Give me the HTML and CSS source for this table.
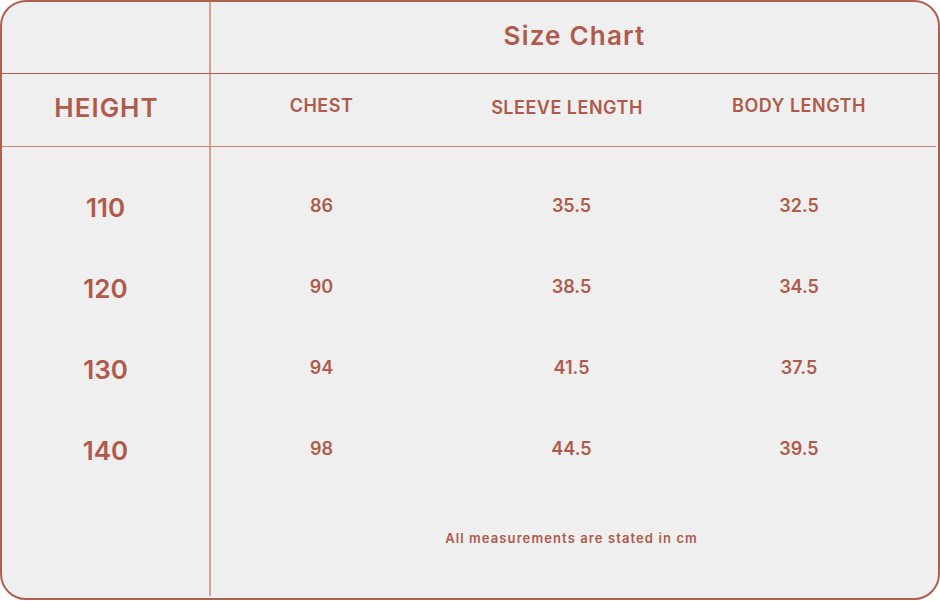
FILE: index.html
```html
<!DOCTYPE html>
<html>
<head>
<meta charset="utf-8">
<link rel="stylesheet" href="styles.css">
</head>
<body>
<div class="chart">
  <div class="row top">
    <div class="side"></div>
    <div class="main title">Size Chart</div>
  </div>
  <div class="row head">
    <div class="side label-big">HEIGHT</div>
    <div class="main cols">
      <div class="c1 label">CHEST</div>
      <div class="c2 label sleeve">SLEEVE LENGTH</div>
      <div class="c3 label">BODY LENGTH</div>
    </div>
  </div>
  <div class="row bodyrow">
    <div class="side list">
      <div class="h">110</div>
      <div class="h">120</div>
      <div class="h">130</div>
      <div class="h">140</div>
    </div>
    <div class="main data">
      <div class="drow"><div class="c1">86</div><div class="c2">35.5</div><div class="c3">32.5</div></div>
      <div class="drow"><div class="c1">90</div><div class="c2">38.5</div><div class="c3">34.5</div></div>
      <div class="drow"><div class="c1">94</div><div class="c2">41.5</div><div class="c3">37.5</div></div>
      <div class="drow"><div class="c1">98</div><div class="c2">44.5</div><div class="c3">39.5</div></div>
      <div class="note">All measurements are stated in cm</div>
    </div>
  </div>
</div>
</body>
</html>
```
FILE: styles.css
```css
html, body {
  margin: 0;
  padding: 0;
  background: #ffffff;
}
body {
  font-family: "Inter", "Lato", sans-serif;
  color: #b05a4a;
}
.chart {
  box-sizing: border-box;
  width: 940px;
  height: 600px;
  border: 2px solid #b0604f;
  border-radius: 26px;
  background: #efefef;
  display: flex;
  flex-direction: column;
  overflow: hidden;
}
.row {
  display: flex;
}
.side {
  box-sizing: border-box;
  width: 209px;
  flex: 0 0 209px;
  border-right: 2px solid #d3a195;
}
.main {
  flex: 1;
}
.top {
  height: 71px;
  border-bottom: 1px solid #b0604f;
}
.title {
  display: flex;
  align-items: center;
  justify-content: center;
  font-size: 26px;
  font-weight: 600;
  letter-spacing: 1.2px;
  padding-bottom: 4px;
}
.head {
  height: 72px;
  border-bottom: 1px solid #c98676;
  margin-right: 2px;
}
.label-big {
  display: flex;
  align-items: center;
  justify-content: center;
  font-size: 26px;
  font-weight: 600;
  letter-spacing: 1px;
  padding-left: 2px;
  padding-bottom: 5px;
}
.cols {
  display: flex;
  align-items: center;
  padding-bottom: 10px;
}
.label {
  font-size: 18px;
  font-weight: 600;
  letter-spacing: 0.5px;
  text-align: center;
}
.sleeve {
  padding-top: 5px;
  padding-right: 9px;
  box-sizing: border-box;
}
.c1 { width: 221px; text-align: center; }
.c2 { width: 279px; text-align: center; }
.c3 { width: 176px; text-align: center; }
.bodyrow {
  flex: 1;
  margin-bottom: 2px;
}
.list {
  display: flex;
  flex-direction: column;
  padding-top: 20px;
}
.h {
  height: 81px;
  display: flex;
  align-items: center;
  justify-content: center;
  font-size: 26px;
  font-weight: 600;
}
.data {
  display: flex;
  flex-direction: column;
  padding-top: 18px;
}
.drow {
  height: 81px;
  display: flex;
  align-items: center;
  font-size: 18px;
  font-weight: 600;
}
.note {
  margin-top: 41px;
  padding-right: 6px;
  text-align: center;
  font-size: 13px;
  font-weight: 600;
  letter-spacing: 1.1px;
}
```
